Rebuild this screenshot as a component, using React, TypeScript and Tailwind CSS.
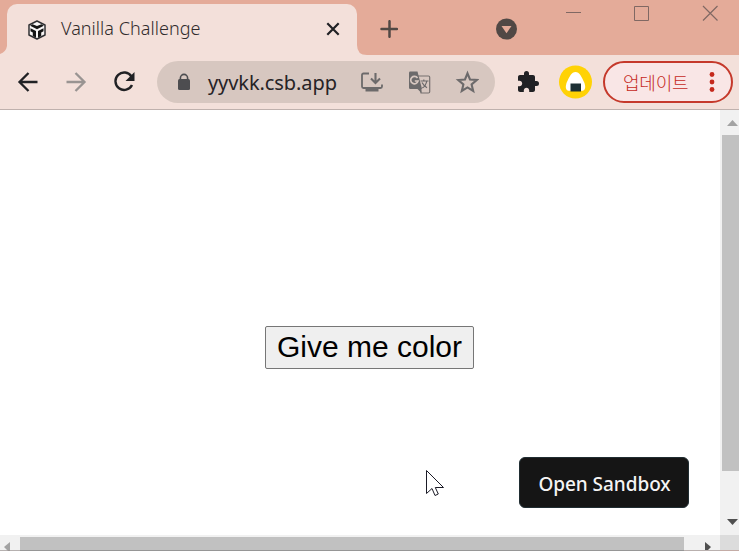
import React from "react";

function CubeIcon() {
  return (
    <svg className="ml-[21px] h-[20px] w-[18px] shrink-0" viewBox="0 0 18 20">
      <path d="M9 1 17 5v10l-8 4-8-4V5Z" fill="#f8f6f6" stroke="#303033" strokeWidth="1.500" strokeLinejoin="round" />
      <path d="M4.500 4.200 9 6.100l4.500-1.900 2.300 1.600L9 9.300 2.200 5.800Z" fill="#151515" />
      <path d="M2.500 8.200 8 11v6.800l-3.200-1.700v-3.500l-2.300-1.300ZM15.500 8.200 10 11v6.800l3.200-1.700v-3.500l2.300-1.300Z" fill="#151515" />
    </svg>
  );
}

function TabStrip() {
  return (
    <div className="flex h-[55px] bg-[#e4ab99]">
      <div className="flex w-[7px] shrink-0 items-end">
        <svg className="h-[9px] w-[7px]" viewBox="0 0 7 9">
          <path d="M7 0v9H0V8Q6 6 7 0Z" fill="#f3e0da" />
        </svg>
      </div>
      <div className="mt-1 flex h-[51px] w-[350px] shrink-0 items-center rounded-t-[10px] bg-[#f3e0da]">
        <CubeIcon />
        <span className="mb-[3px] ml-[15px] w-[141px] whitespace-nowrap font-['Noto_Sans',sans-serif] text-[18px] font-light leading-6 tracking-[0.040px] text-[#302b2c]">Vanilla Challenge</span>
        <svg className="mb-px ml-[124px] h-[14px] w-[14px]" viewBox="0 0 14 14" fill="none" stroke="#202124" strokeWidth="2.200">
          <path d="m1.300 1.300 11.400 11.400m0-11.400L1.300 12.700" />
        </svg>
      </div>
      <svg className="mt-[45px] h-[10px] w-[10px] shrink-0" viewBox="0 0 10 10">
        <path d="M0 0Q0 10 10 10H0Z" fill="#f3e0da" />
      </svg>
      <svg className="ml-[13px] mt-5 h-[18px] w-[18px]" viewBox="0 0 18 18" stroke="#514844" strokeWidth="2.500" strokeLinecap="round">
        <path d="M9.500 1.200v15.600M1.500 9h15.500" />
      </svg>
      <svg className="ml-[98px] mt-[18px] h-[22px] w-[22px]" viewBox="0 0 22 22">
        <circle cx="10.500" cy="11" r="10.500" fill="#514845" />
        <path d="M5.500 8h10l-5 7.300Z" fill="#e4ab99" />
      </svg>
      <svg className="ml-[48px] mt-[5px] h-[18px] w-[16px]" viewBox="0 0 16 18" stroke="#806863">
        <path d="M0 7.500h15" />
      </svg>
      <svg className="ml-[51px] mt-[5px] h-[18px] w-[18px]" viewBox="0 0 18 18" fill="none" stroke="#806863">
        <path d="M1.500 1.500h14v14h-14Z" />
      </svg>
      <svg className="ml-[51px] mt-[5px] h-[18px] w-[18px]" viewBox="0 0 18 18" stroke="#806863" strokeWidth="1.200">
        <path d="m1 1 14.500 14.500M15.500 1 1 15.500" />
      </svg>
    </div>
  );
}

function AddressBar() {
  return (
    <div className="ml-[21px] flex h-[42px] w-[338px] shrink-0 items-center rounded-full bg-[#d7c7c0]">
      <svg className="ml-5 h-[18px] w-[14px] shrink-0" viewBox="0 0 14 18">
        <path d="M3.400 7V5a3.600 3.600 0 0 1 7.200 0v2" fill="none" stroke="#4d4d50" strokeWidth="1.600" />
        <rect x="1" y="6" width="12" height="11" rx="1.500" fill="#4d4d50" />
      </svg>
      <span className="ml-[17px] mt-[2px] w-[130px] whitespace-nowrap font-['Noto_Sans',sans-serif] text-[20px] leading-6 tracking-[-0.080px] text-[#262326]">yyvkk.csb.app</span>
      <svg className="ml-[22px] h-[22px] w-[24px] shrink-0" viewBox="0 0 24 22" fill="none" stroke="#6c6a6b" strokeWidth="1.800">
        <path d="M9 2.500H3.500Q2 2.500 2 4v11.500Q2 17 3.500 17h17q1.500 0 1.500-1.500V13.500" />
        <path d="M15.500 2v10M11 7.500l4.500 4.500L20 7.500" strokeWidth="2.100" />
        <path d="M5.500 19h13" strokeWidth="3" />
      </svg>
      <svg className="ml-6 h-[23px] w-[23px] shrink-0" viewBox="0 0 23 23">
        <path d="M9 5h11.500q1.200 0 1.200 1.200v14.600q0 1.200-1.200 1.200H13Z" fill="none" stroke="#77716f" strokeWidth="1.200" />
        <path d="M2.200 0.500H9.500l4.500 17.500H2.200Q1 18 1 16.800V1.700Q1 0.500 2.200 0.500Z" fill="#6c6a6b" />
        <path d="M13.500 18v4l-4-4Z" fill="#6c6a6b" />
        <path d="M9.500 7A3.700 3.700 0 1 0 10 10H6.800" fill="none" stroke="#d7c7c0" strokeWidth="1.700" />
        <path d="M12.500 10h8M15.800 8.500V10m3 0q-1 5-4.500 7M14 11.500q1.500 3 5 5.200" fill="none" stroke="#6c6a6b" strokeWidth="1.200" />
      </svg>
      <svg className="ml-[24px] h-[24px] w-[24px] shrink-0" viewBox="0 0 24 24">
        <path d="m12.500 3.300 2.500 6.200 6.700.5-5.100 4.400 1.600 6.500-5.700-3.500-5.700 3.500 1.600-6.500L3.300 10l6.700-.5Z" fill="none" stroke="#6c6a6b" strokeWidth="2.100" />
      </svg>
    </div>
  );
}

function Toolbar() {
  return (
    <div className="flex h-[55px] items-center border-b border-[#bfb1ad] bg-[#f3e0da]">
      <svg className="mb-px ml-[17px] h-[22px] w-[22px] shrink-0" viewBox="0 0 22 22" fill="none" stroke="#202124" strokeWidth="2.300">
        <path d="M20.500 11H3M11.500 2l-9 9 9 9" />
      </svg>
      <svg className="mb-px ml-[26px] h-[22px] w-[22px] shrink-0" viewBox="0 0 22 22" fill="none" stroke="#999492" strokeWidth="2.300">
        <path d="M1.500 11H19M10.500 2l9 9-9 9" />
      </svg>
      <svg className="mb-px ml-[26px] h-[22px] w-[23px] shrink-0" viewBox="0 0 23 22">
        <path d="M18.500 5.500A8.700 8.700 0 1 0 19 14" fill="none" stroke="#202124" strokeWidth="2.400" />
        <path d="M21.500 1v9h-9Z" fill="#202124" />
      </svg>
      <AddressBar />
      <svg className="ml-[21px] h-[24px] w-[24px] shrink-0" viewBox="0 0 24 24">
        <path d="M20.500 11H19V7c0-1.100-.9-2-2-2h-4V3.500a2.500 2.500 0 0 0-5 0V5H4c-1.100 0-1.990.9-1.990 2v3.800H3.500c1.490 0 2.700 1.210 2.700 2.700s-1.210 2.700-2.700 2.700H2V20c0 1.100.9 2 2 2h3.800v-1.500c0-1.490 1.210-2.700 2.700-2.700s2.700 1.210 2.700 2.700V22H17c1.100 0 2-.9 2-2v-4h1.500a2.500 2.500 0 0 0 0-5Z" fill="#202124" />
      </svg>
      <svg className="ml-[19px] h-[34px] w-[34px] shrink-0" viewBox="0 0 34 34">
        <circle cx="16.500" cy="17" r="16.500" fill="#ffd205" />
        <path d="M16.500 7C20.500 7 22.500 11.500 25.500 18q2 6.500-1.500 7.700H9Q5.500 24.500 7.500 18C10.500 11.500 12.500 7 16.500 7Z" fill="#fff" />
        <path d="M11.500 18.500h10.500v8H11.500Z" fill="#1d3035" />
      </svg>
      <div className="ml-[10px] flex h-[42px] w-[130px] shrink-0 items-center rounded-full border-2 border-[#c5392b] bg-[#f9e6e6] text-[#c5291d]">
        <span className="mb-px ml-[18px] w-[68px] whitespace-nowrap font-['Noto_Sans_CJK_KR',sans-serif] text-[18px] font-light leading-6 tracking-[-0.200px]">업데이트</span>
        <svg className="mb-px ml-[18px] h-[22px] w-[6px]" viewBox="0 0 6 22" fill="currentColor">
          <circle cx="3" cy="3.500" r="2.400" />
          <circle cx="3" cy="11" r="2.400" />
          <circle cx="3" cy="18.500" r="2.400" />
        </svg>
      </div>
    </div>
  );
}

function VerticalScrollbar() {
  return (
    <div className="flex h-[425px] w-[19px] shrink-0 flex-col bg-[#f1f1f1] pl-[2px]">
      <svg className="h-[25px] w-[17px] shrink-0" viewBox="0 0 17 25">
        <path d="M5 16h11l-5.500-6Z" fill="#a3a3a3" />
      </svg>
      <div className="h-[336px] w-[17px] bg-[#c1c1c1]" />
      <svg className="mt-[48px] h-[6px] w-[17px]" viewBox="0 0 17 6">
        <path d="M5 0h11l-5.500 6Z" fill="#505050" />
      </svg>
    </div>
  );
}

function HorizontalScrollbar() {
  return (
    <div className="flex h-4 bg-[#f1f1f1]">
      <svg className="h-4 w-5 shrink-0" viewBox="0 0 20 16">
        <path d="M10 7v9H8l-4-4Z" fill="#a3a3a3" />
        <path d="M0 15h20v1H0Z" fill="#968f8d" opacity=".65" />
      </svg>
      <div className="mt-[2px] h-[14px] w-[664px] border-b border-[#969696] bg-[#c1c1c1]" />
      <svg className="h-4 w-9 shrink-0" viewBox="0 0 36 16">
        <path d="M21 7v9h2l4-4Z" fill="#505050" />
        <path d="M0 15h36v1H0Z" fill="#b9b0ae" />
      </svg>
      <div className="h-4 w-[19px] border-b border-[#c4aca6] bg-[#dcdcdc]" />
    </div>
  );
}

export default function App() {
  return (
    <main className="h-[551px] w-[739px] overflow-hidden bg-white">
      <TabStrip />
      <Toolbar />
      <div className="flex h-[425px]">
        <section className="w-[720px] bg-white pt-[216px]">
          <button className="ml-[265px] flex h-[43px] w-[209px] items-center justify-center whitespace-nowrap rounded-[2px] border border-[#767676] bg-[#efefef] pb-[2px] font-['Liberation_Sans',sans-serif] text-[30px] leading-9 text-black">Give me color</button>
          <div className="flex pt-[88px]">
            <svg className="ml-[425px] mt-[12px] h-[29px] w-[20px] shrink-0" viewBox="0 0 20 29">
              <path d="M1.500 1.500v23l5.500-5 3 7 3.300-1.500-3-6.500h8.200Z" fill="#fff" stroke="#1b1b27" strokeWidth="1" />
            </svg>
            <button className="ml-[74px] flex h-[51px] w-[170px] items-center justify-center whitespace-nowrap rounded-[6px] border border-[#202d32] bg-[#151515] pl-px pt-[3px] font-['Noto_Sans',sans-serif] text-[19px] font-medium leading-6 tracking-[-0.050px] text-[#f5f4f4]">Open Sandbox</button>
          </div>
        </section>
        <VerticalScrollbar />
      </div>
      <HorizontalScrollbar />
    </main>
  );
}
